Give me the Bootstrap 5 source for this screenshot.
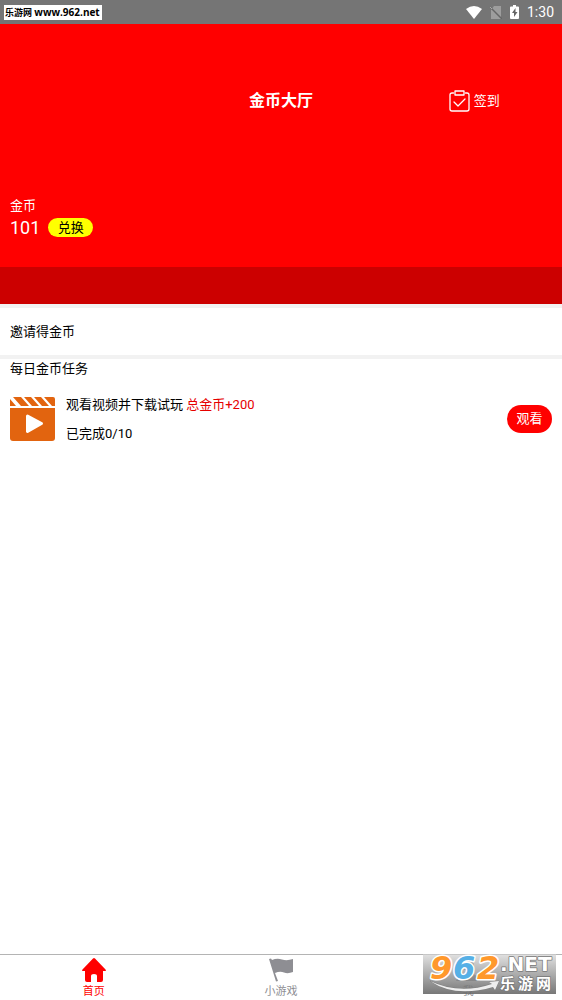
<!DOCTYPE html>
<html lang="zh-CN">
<head>
<meta charset="utf-8">
<meta name="viewport" content="width=device-width, initial-scale=1">
<title>金币大厅</title>
<link href="https://cdn.jsdelivr.net/npm/bootstrap@5.3.0/dist/css/bootstrap.min.css" rel="stylesheet">
<style>
  body { font-family: Roboto, "Noto Sans CJK SC", sans-serif; font-size: 13px; line-height: 20px; color: #000; }
  svg { display: block; flex: none; }
  .status-bar { height: 24px; background: #757575; color: #fff; padding: 0 8px 0 4px; font-size: 14px; }
  .site-tag { background: #fff; color: #000; font: bold 9px/14px "Open Sans", "Noto Sans CJK SC", sans-serif; width: 98px; padding-left: 1px; white-space: nowrap; }
  .site-tag span { font-size: 10px; }
  .hero { background: red; color: #fff; padding-top: 66px; }
  .hero-title { font-size: 16px; line-height: 22px; font-weight: bold; }
  .sign-link { color: #fff; }
  .coins { padding: 84px 10px 28px; }
  .coin-count { font-size: 18px; line-height: 23px; }
  .pill { border: 0; border-radius: 14px; padding: 0; width: 45px; height: 28px; font-size: 13px; line-height: 20px; }
  .pill-yellow { background: #ff0; color: #000; height: 19px; }
  .pill-red { background: red; color: #fff; }
  .band { height: 37px; background: #c00; }
  .invite { border-top: 4px solid #f2f2f2; border-bottom: 4px solid #f2f2f2; padding: 14px 10px 13px; color: #000; }
  .task-title { font-size: 13px; line-height: 20px; padding: 0 10px; }
  .task { padding: 15px 10px; }
  .task-text { margin-left: 10px; }
  .bonus { color: #e60000; }
  .task-line { line-height: 21px; }
  .tab-bar { height: 46px; border-top: 1px solid #b4b4b4; background: #fff; }
  .tab-bar a { font-size: 11px; line-height: 15px; color: #8e8e93; padding-top: 3px; gap: 2px; }
  .tab-bar a.active { color: red; }
  .watermark { right: 6px; bottom: 6px; width: 133px; height: 40px; background: linear-gradient(rgba(210,210,210,.65), rgba(105,105,105,.9)); pointer-events: none; }
</style>
</head>
<body class="d-flex flex-column min-vh-100 bg-white">
<div class="status-bar d-flex align-items-center justify-content-between">
  <div class="site-tag">乐游网 <span>www.962.net</span></div>
  <div class="d-flex align-items-center">
    <svg class="me-2" width="16" height="13" viewBox="0 0 16 13" fill="#fff"><path d="M0 3Q8-3 16 3L8 13z"/></svg>
    <svg class="me-2" width="12" height="13" viewBox="0 0 12 13"><path d="M4 0h7v13H1V4z" fill="#9d9d9d"/><path d="M0 1l12 12" stroke="#666" stroke-width="1.5"/><path d="M0 1l2 2" stroke="#aaa"/></svg>
    <svg class="me-2" width="9" height="14" viewBox="0 0 9 14"><path d="M3 0h3v1.500h2q1 0 1 1V13q0 1-1 1H1q-1 0-1-1V2.500q0-1 1-1h2z" fill="#fff"/><path d="M5.500 3L2 8h2v4l3.500-5h-2z" fill="#666"/></svg>
    <span>1:30</span>
  </div>
</div>

<header class="hero">
  <div class="row g-0 align-items-center">
    <h1 class="hero-title col-4 offset-4 text-center mb-0">金币大厅</h1>
    <div class="col-4 d-flex justify-content-center ps-2">
      <a href="#" class="sign-link d-flex align-items-center gap-1 text-decoration-none ps-1">
        <svg width="21" height="22" viewBox="0 0 21 22" fill="none" stroke="#fff" stroke-width="1.300" stroke-linejoin="round" stroke-linecap="round"><path d="M4.500 3H3Q1 3 1 5v14q0 2 2 2h15q2 0 2-2V5q0-2-2-2h-1.500M6 1h9v4H6zM5 12l4 4 7-7"/></svg>
        签到
      </a>
    </div>
  </div>
  <div class="coins">
    <div>金币</div>
    <div class="d-flex align-items-center">
      <span class="coin-count me-2">101</span>
      <button type="button" class="pill pill-yellow d-flex align-items-center justify-content-center">兑换</button>
    </div>
  </div>
  <div class="band"></div>
</header>

<main class="flex-grow-1">
  <a href="#" class="invite d-block text-decoration-none">邀请得金币</a>
  <section>
    <h2 class="task-title mb-0 fw-normal">每日金币任务</h2>
    <div class="task d-flex align-items-center">
      <svg width="46" height="44" viewBox="0 0 46 44" fill="#e2640f"><path d="M0 11h45v30q0 3-3 3H3q-3 0-3-3z"/><path d="M0 9V2l6 7zM3 0h8l8 9h-8zM14 0h7l8 9h-7zM24 0h7l8 9h-7zM34 0h9q2 0 2 2v7h-3z"/><path d="M17.500 19l14 7.500-14 8z" fill="#fff" stroke="#fff" stroke-width="3" stroke-linejoin="round"/></svg>
      <div class="task-text flex-grow-1 d-flex flex-column gap-2">
        <div class="task-line">观看视频并下载试玩 <span class="bonus">总金币+200</span></div>
        <div class="task-line">已完成0/10</div>
      </div>
      <button type="button" class="pill pill-red">观看</button>
    </div>
  </section>
</main>

<nav class="tab-bar row g-0 sticky-bottom">
  <a href="#" class="active col-4 d-flex flex-column align-items-center text-decoration-none">
    <svg width="24" height="24" viewBox="0 0 24 24" fill="red"><path d="M11 .5q1-1 2 0L23.500 11.500q1 1.500-.500 1.500H21V22q0 2-2 2h-4v-6q0-2-3-2t-3 2v6H5q-2 0-2-2v-9H1Q-.500 13 .500 11.500z"/></svg>
    首页
  </a>
  <a href="#" class="col-4 d-flex flex-column align-items-center text-decoration-none">
    <svg width="24" height="24" viewBox="0 0 24 24" fill="#8e8e93"><path d="M0 1l2-.5L3 2q5-2 10-.5T24 1v13q-5 2-9 .5T6 15l3 8-2 .5z"/></svg>
    小游戏
  </a>
  <a href="#" class="col-4 d-flex flex-column align-items-center text-decoration-none">
    <svg width="24" height="24" viewBox="0 0 24 24" fill="#8e8e93"><circle cx="12" cy="7" r="6"/><path d="M0 23q3-7 12-9 9 2 12 9z"/></svg>
    我
  </a>
  <div class="watermark position-absolute">
    <svg width="133" height="40" viewBox="0 0 133 40" stroke-linejoin="round" paint-order="stroke">
      <path d="M7 27q29 14 62 3l-3-2 10-1-4 9-2-3Q32 44 7 27z" fill="#eee" stroke="#777" stroke-width=".5"/>
      <g font-family="DejaVu Sans, sans-serif" font-weight="bold" font-style="italic" font-size="32" stroke="#fff" stroke-width="3">
        <text x="7" y="25" fill="#ff982b">9</text>
        <text x="30" y="25" fill="#56b0e6">6</text>
        <text x="54" y="25" fill="#ff982b">2</text>
      </g>
      <g fill="#fff" stroke="#777" stroke-width="1.500" font-weight="bold">
        <text x="77" y="17" font-size="20" font-family="DejaVu Sans, sans-serif">.NET</text>
        <g font-size="15" font-family="Noto Sans CJK SC, sans-serif"><text x="77" y="35">乐</text><text x="95" y="35">游</text><text x="113" y="35">网</text></g>
      </g>
    </svg>
  </div>
</nav>
<script src="https://cdn.jsdelivr.net/npm/bootstrap@5.3.0/dist/js/bootstrap.bundle.min.js"></script>
</body>
</html>
